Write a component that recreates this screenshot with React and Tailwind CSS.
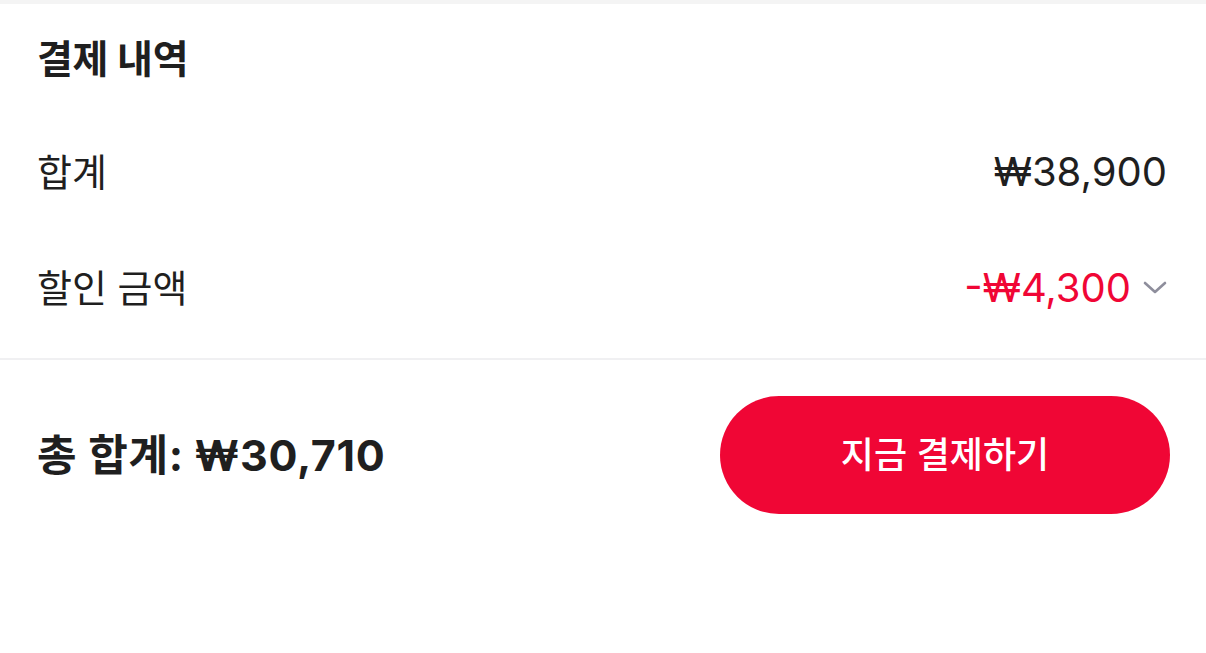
export default function App() {
  const font = { fontFamily: 'Inter, "Noto Sans CJK KR", sans-serif' };
  return (
    <div className="w-[1206px] h-[653px] bg-white text-[#1f1f1f]" style={font}>
      <div className="h-[4px] bg-[#f4f4f4]" />
      <div className="px-[37px] pr-[39px]">
        <div className="h-[110px] flex items-center">
          <h2 className="text-[39px] font-bold tracking-[-0.3px]">결제 내역</h2>
        </div>
        <div className="h-[116px] flex items-center justify-between">
          <span className="text-[38px] font-normal">합계</span>
          <span className="text-[40px] font-normal">₩38,900</span>
        </div>
        <div className="h-[116px] flex items-center justify-between">
          <span className="text-[38px] font-normal">할인 금액</span>
          <span className="flex items-center gap-[12px]">
            <span className="text-[40px] text-[#f00635]">-₩4,300</span>
            <svg width="24" height="14" viewBox="0 0 24 14" fill="none">
              <path d="M2 2 L12 11 L22 2" stroke="#8e8e9c" strokeWidth="2.6" strokeLinecap="round" strokeLinejoin="round" />
            </svg>
          </span>
        </div>
      </div>
      <div className="mt-[12px] h-[2px] bg-[#f0f0f2]" />
      <div className="pl-[37px] pr-[36px] pt-[36px] flex items-center justify-between">
        <span className="text-[43px] font-bold tracking-[0.7px]">총 합계: ₩30,710</span>
        <button className="w-[450px] h-[118px] rounded-[59px] bg-[#f00635] text-white text-[36px] font-medium flex items-center justify-center">
          지금 결제하기
        </button>
      </div>
    </div>
  );
}
